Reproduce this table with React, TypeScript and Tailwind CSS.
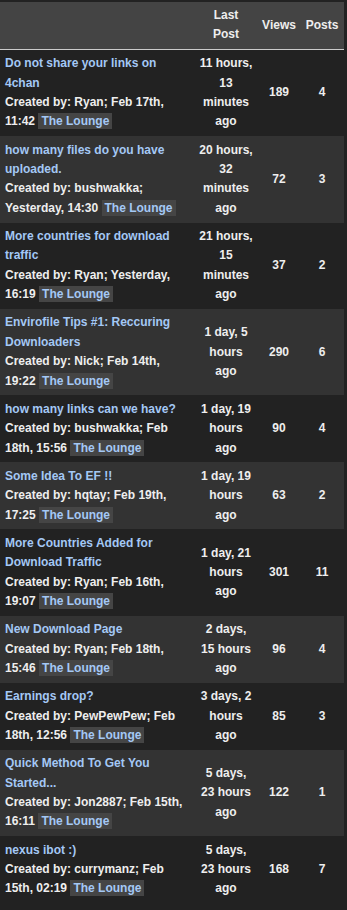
import React from 'react';

interface Topic {
  title: string;
  author: string;
  created: string;
  lastPost: string;
  views: number;
  posts: number;
}

const topics: Topic[] = [
  { title: 'Do not share your links on 4chan', author: 'Ryan', created: 'Feb 17th, 11:42', lastPost: '11 hours, 13 minutes ago', views: 189, posts: 4 },
  { title: 'how many files do you have uploaded.', author: 'bushwakka', created: 'Yesterday, 14:30', lastPost: '20 hours, 32 minutes ago', views: 72, posts: 3 },
  { title: 'More countries for download traffic', author: 'Ryan', created: 'Yesterday, 16:19', lastPost: '21 hours, 15 minutes ago', views: 37, posts: 2 },
  { title: 'Envirofile Tips #1: Reccuring Downloaders', author: 'Nick', created: 'Feb 14th, 19:22', lastPost: '1 day, 5 hours ago', views: 290, posts: 6 },
  { title: 'how many links can we have?', author: 'bushwakka', created: 'Feb 18th, 15:56', lastPost: '1 day, 19 hours ago', views: 90, posts: 4 },
  { title: 'Some Idea To EF !!', author: 'hqtay', created: 'Feb 19th, 17:25', lastPost: '1 day, 19 hours ago', views: 63, posts: 2 },
  { title: 'More Countries Added for Download Traffic', author: 'Ryan', created: 'Feb 16th, 19:07', lastPost: '1 day, 21 hours ago', views: 301, posts: 11 },
  { title: 'New Download Page', author: 'Ryan', created: 'Feb 18th, 15:46', lastPost: '2 days, 15 hours ago', views: 96, posts: 4 },
  { title: 'Earnings drop?', author: 'PewPewPew', created: 'Feb 18th, 12:56', lastPost: '3 days, 2 hours ago', views: 85, posts: 3 },
  { title: 'Quick Method To Get You Started...', author: 'Jon2887', created: 'Feb 15th, 16:11', lastPost: '5 days, 23 hours ago', views: 122, posts: 1 },
  { title: 'nexus ibot :)', author: 'currymanz', created: 'Feb 15th, 02:19', lastPost: '5 days, 23 hours ago', views: 168, posts: 7 },
];

export default function App() {
  return (
    <div className="min-h-[910px] bg-[#222222] pt-[2px] font-['Liberation_Sans',Arial,sans-serif] text-[12px] font-bold leading-[19.4px] text-[#eeeeee]">
      <table className="w-[344px] table-fixed border-collapse">
        <colgroup>
          <col className="w-[194px]" />
          <col className="w-[64px]" />
          <col className="w-[42px]" />
          <col className="w-[44px]" />
        </colgroup>
        <thead>
          {/* Header row */}
          <tr className="bg-[#444444] border-b border-[#cccccc]">
            <th className="py-[4px]" />
            <th className="px-[4px] py-[4px] text-center align-middle">
              Last
              <br />
              Post
            </th>
            <th className="px-0 py-[4px] text-center align-middle">Views</th>
            <th className="px-0 py-[4px] text-center align-middle">Posts</th>
          </tr>
        </thead>
        <tbody>
          {topics.map((t, i) => (
            <tr key={t.title} className={i % 2 === 1 ? 'bg-[#333333]' : 'bg-[#222222]'}>
              <td className="px-[5px] py-[4.4px] align-middle text-left">
                <a href="#" className="text-[#a4c8f5]">{t.title}</a>
                <br />
                Created by: {t.author}; {t.created}{' '}
                <span className="bg-[#454545] px-[3px] py-[1px] text-[#a4c8f5]">The Lounge</span>
              </td>
              <td className="px-[4px] py-[4.4px] text-center align-middle">{t.lastPost}</td>
              <td className="px-0 py-[4.4px] text-center align-middle">{t.views}</td>
              <td className="px-0 py-[4.4px] text-center align-middle">{t.posts}</td>
            </tr>
          ))}
        </tbody>
      </table>
    </div>
  );
}
